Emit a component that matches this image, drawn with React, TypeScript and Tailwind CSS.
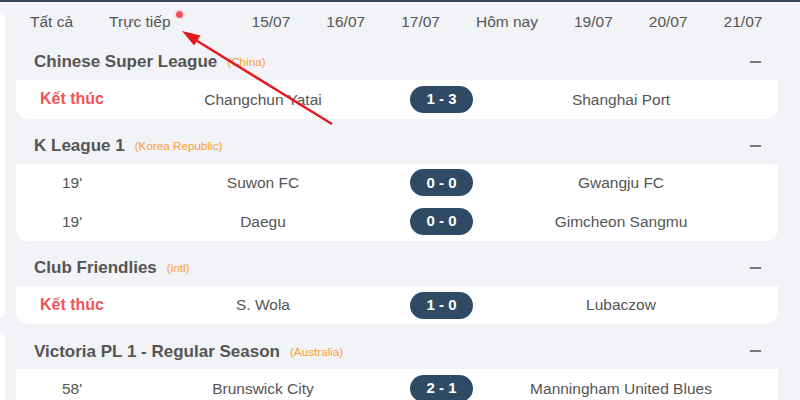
import React from "react";

type Match = {
  status: string;
  finished?: boolean;
  home: string;
  score: string;
  away: string;
};

type League = {
  name: string;
  country: string;
  matches: Match[];
};

const tabs = ["15/07", "16/07", "17/07", "Hôm nay", "19/07", "20/07", "21/07"];

const leagues: League[] = [
  {
    name: "Chinese Super League",
    country: "(China)",
    matches: [{ status: "Kết thúc", finished: true, home: "Changchun Yatai", score: "1 - 3", away: "Shanghai Port" }],
  },
  {
    name: "K League 1",
    country: "(Korea Republic)",
    matches: [
      { status: "19'", home: "Suwon FC", score: "0 - 0", away: "Gwangju FC" },
      { status: "19'", home: "Daegu", score: "0 - 0", away: "Gimcheon Sangmu" },
    ],
  },
  {
    name: "Club Friendlies",
    country: "(intl)",
    matches: [{ status: "Kết thúc", finished: true, home: "S. Wola", score: "1 - 0", away: "Lubaczow" }],
  },
  {
    name: "Victoria PL 1 - Regular Season",
    country: "(Australia)",
    matches: [
      { status: "58'", home: "Brunswick City", score: "2 - 1", away: "Manningham United Blues" },
    ],
  },
];

function MatchRow({ m }: { m: Match }) {
  return (
    <div className="flex items-center h-[38.6px] text-[15.5px] text-[#555]">
      <div
        className={`w-[112px] text-center ${
          m.finished ? "font-bold text-[16px] text-[#f0555a]" : ""
        }`}
      >
        {m.status}
      </div>
      <div className="w-[270px] text-center truncate">{m.home}</div>
      <div className="ml-[12px] w-[63px] h-[27px] rounded-full bg-[#2f4a64] text-white text-[15px] font-bold flex items-center justify-center">
        {m.score}
      </div>
      <div className="ml-[12px] w-[272px] text-center truncate">{m.away}</div>
    </div>
  );
}

function LeagueBlock({ league }: { league: League }) {
  return (
    <div>
      {/* league title */}
      <div className="flex items-center pt-[17px] pb-[8px] pl-[18px] pr-[17px] h-[45px]">
        <span className="text-[17px] font-bold text-[#555]">{league.name}</span>
        <span className="ml-[10px] text-[11.7px] text-[#f7a035]">{league.country}</span>
        <div className="ml-auto w-[11px] h-[2px] bg-[#777]"></div>
      </div>
      <div className="bg-white rounded-b-[12px]">
        {league.matches.map((m, i) => (
          <MatchRow key={i} m={m} />
        ))}
      </div>
    </div>
  );
}

export default function App() {
  return (
    <div
      className="relative w-[800px] h-[400px] overflow-hidden bg-[#f2f3f7]"
      style={{ fontFamily: '"Liberation Sans", Arial, sans-serif' }}
    >
      <div className="h-[2px] bg-[#34495e]"></div>
      <div className="flex">
        {/* side panel edge */}
        <div className="w-[5px] flex flex-col gap-[14px] pt-[10px]">
          <div className="h-[306px] bg-white rounded-r-[8px]"></div>
          <div className="h-[200px] bg-white rounded-r-[8px]"></div>
        </div>

        <div className="flex-1 pl-[11px] pr-[22px]">
          {/* tabs */}
          <div className="flex items-center h-[33px] pt-[7px] pl-[14px] gap-[36px] text-[15.5px] text-[#555]">
            <span>Tất cả</span>
            <span className="relative mr-[45px]">
              Trực tiếp
              <span className="absolute -right-[12px] top-[1px] w-[7px] h-[7px] rounded-full bg-[#f0505a] shadow-[0_0_0_2px_rgba(240,80,90,0.08)]"></span>
            </span>
            {tabs.map((t) => (
              <span key={t}>{t}</span>
            ))}
          </div>

          {leagues.map((l) => (
            <LeagueBlock key={l.name} league={l} />
          ))}
        </div>
      </div>

      {/* annotation arrow */}
      <svg className="absolute inset-0 pointer-events-none" width="800" height="400">
        <line x1="332" y1="124" x2="194" y2="39" stroke="#e3191f" strokeWidth="2.5" />
        <polygon points="182,31 194.1,45.6 200.5,35.4" fill="#e3191f" />
      </svg>
    </div>
  );
}
